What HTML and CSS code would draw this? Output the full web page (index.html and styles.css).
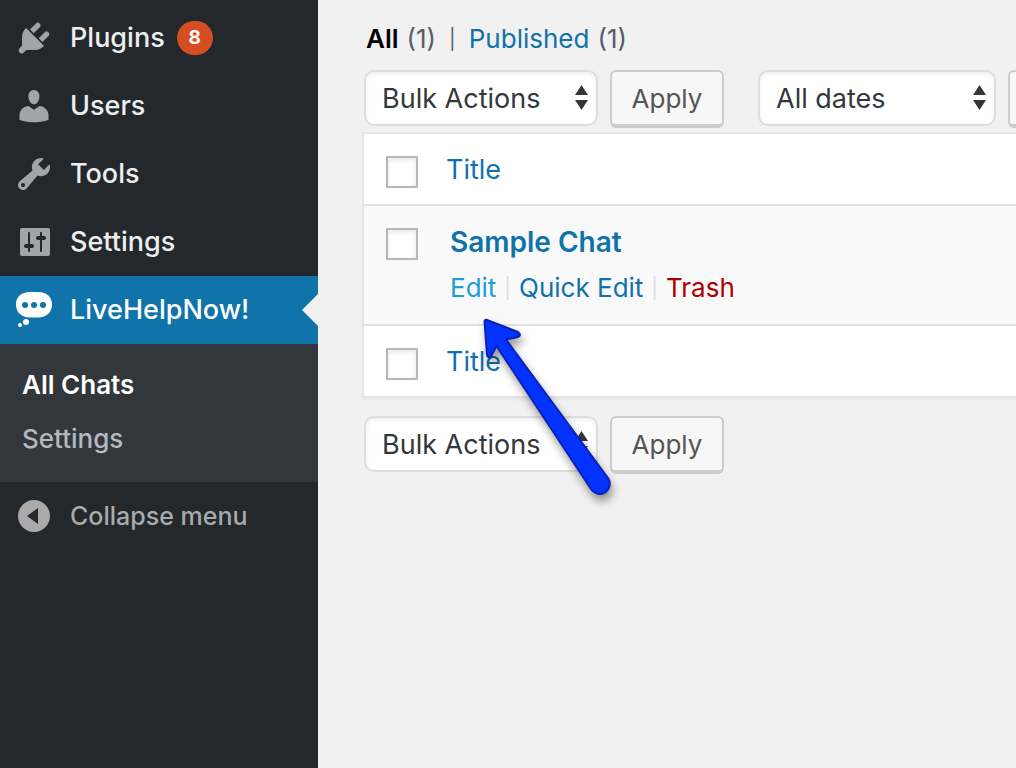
FILE: index.html
```html
<!DOCTYPE html>
<html lang="en">
<head>
  <meta charset="UTF-8">
  <meta name="viewport" content="width=device-width, initial-scale=1.0">
  <title>All Chats</title>
  <link rel="stylesheet" href="styles.css">
</head>
<body>
  <!-- Admin menu -->
  <nav class="admin-menu">
    <a class="menu-item" href="#plugins">
      <svg class="menu-icon" viewBox="0 0 20 20"><path d="M13.11 4.36L9.87 7.6 8 5.73l3.24-3.24c.35-.34 1.05-.2 1.56.32.52.51.66 1.21.31 1.55zm-8 1.77l.91-1.12 9.01 9.01-1.19.84c-.71.71-2.63 1.16-3.82 1.16H6.14L4.9 17.26c-.59.59-1.54.59-2.12 0-.59-.58-.59-1.53 0-2.12l1.24-1.24v-3.88c0-1.13.4-3.19 1.09-3.89zm7.26 3.97l3.24-3.24c.34-.35 1.04-.21 1.55.31.52.51.66 1.21.31 1.55l-3.24 3.25z"/></svg>
      Plugins <span class="update-count">8</span>
    </a>
    <a class="menu-item" href="#users">
      <svg class="menu-icon" viewBox="0 0 20 20"><path d="M10 9.25c-2.27 0-2.73-3.44-2.73-3.44C7 4.02 7.82 2 9.97 2c2.16 0 2.98 2.02 2.71 3.81 0 0-.41 3.44-2.68 3.44zm0 2.57L12.72 10c2.39 0 4.52 2.33 4.52 4.53v2.49s-3.65 1.13-7.24 1.13c-3.65 0-7.24-1.13-7.24-1.13v-2.49c0-2.25 1.94-4.48 4.47-4.48z"/></svg>
      Users
    </a>
    <a class="menu-item" href="#tools">
      <svg class="menu-icon" viewBox="0 0 20 20"><path d="M16.68 9.77c-1.34 1.34-3.3 1.67-4.95.99l-5.41 6.52c-.99.99-2.59.99-3.58 0s-.99-2.59 0-3.57l6.52-5.42c-.68-1.65-.35-3.61.99-4.95 1.28-1.28 3.12-1.62 4.72-1.06l-2.89 2.89 2.82 2.82 2.86-2.87c.53 1.58.18 3.39-1.08 4.65zM3.81 16.21c.4.39 1.04.39 1.43 0 .4-.4.4-1.04 0-1.43-.39-.4-1.03-.4-1.43 0-.39.39-.39 1.03 0 1.43z"/></svg>
      Tools
    </a>
    <a class="menu-item" href="#settings">
      <svg class="menu-icon" viewBox="0 0 20 20"><path d="M18 16V4c0-.55-.45-1-1-1H4c-.55 0-1 .45-1 1v12c0 .55.45 1 1 1h13c.55 0 1-.45 1-1zM8 11h1c.55 0 1 .45 1 1s-.45 1-1 1H8v1.5c0 .28-.22.5-.5.5s-.5-.22-.5-.5V13H6c-.55 0-1-.45-1-1s.45-1 1-1h1V5.5c0-.28.22-.5.5-.5s.5.22.5.5V11zm5-2h-1c-.55 0-1-.45-1-1s.45-1 1-1h1V5.5c0-.28.22-.5.5-.5s.5.22.5.5V7h1c.55 0 1 .45 1 1s-.45 1-1 1h-1v5.5c0 .28-.22.5-.5.5s-.5-.22-.5-.5V9z"/></svg>
      Settings
    </a>
    <a class="menu-item current" href="#livehelpnow">
      <svg class="menu-icon" viewBox="0 0 40 40">
        <path fill-rule="evenodd" d="M16 2h8c9 0 14 5 14 12.500S33 27.500 24 27.500h-8C7 27.500 2 22 2 14.500S7 2 16 2zM11 12a3 3 0 1 0 0 6 3 3 0 0 0 0-6zm9 0a3 3 0 1 0 0 6 3 3 0 0 0 0-6zm9 0a3 3 0 1 0 0 6 3 3 0 0 0 0-6z"/>
        <circle cx="12" cy="32" r="3"/>
        <circle cx="6" cy="35" r="2"/>
      </svg>
      LiveHelpNow!
    </a>
    <div class="submenu">
      <a class="submenu-item active" href="#all-chats">All Chats</a>
      <a class="submenu-item" href="#chat-settings">Settings</a>
    </div>
    <button type="button" class="menu-item collapse">
      <svg class="menu-icon" viewBox="0 0 40 40"><path fill-rule="evenodd" d="M20 4a16 16 0 1 0 0 32 16 16 0 0 0 0-32zm4 8v16l-11-8z"/></svg>
      Collapse menu
    </button>
  </nav>

  <!-- Chat list -->
  <main class="content">
    <div class="views">
      <a class="view-current" href="#all">All</a>
      <span>(1)</span>
      <span class="views-separator">|</span>
      <a href="#published">Published</a>
      <span>(1)</span>
    </div>

    <div class="tablenav">
      <div class="actions">
        <div class="select-box">
          <select class="bulk-select" aria-label="Select bulk action">
            <option>Bulk Actions</option>
            <option>Edit</option>
            <option>Move to Trash</option>
          </select>
          <svg class="select-arrows" viewBox="0 0 13 25"><path d="M6.500 0L13 10H0zM0 15h13L6.500 25z"/></svg>
        </div>
        <button type="button" class="button">Apply</button>
      </div>
      <div class="actions">
        <div class="select-box">
          <select class="date-select" aria-label="Filter by date">
            <option>All dates</option>
          </select>
          <svg class="select-arrows" viewBox="0 0 13 25"><path d="M6.500 0L13 10H0zM0 15h13L6.500 25z"/></svg>
        </div>
        <button type="button" class="button" aria-label="Filter"></button>
      </div>
    </div>

    <div class="table-box">
      <table class="chat-table">
        <thead>
          <tr>
            <td class="check-column"><input type="checkbox" aria-label="Select all"></td>
            <th scope="col"><a href="#title">Title</a></th>
          </tr>
        </thead>
        <tbody>
          <tr>
            <td class="check-column"><input type="checkbox" aria-label="Select Sample Chat"></td>
            <td class="chat-cell">
              <a class="row-title" href="#sample-chat">Sample Chat</a>
              <div class="row-actions">
                <a class="hovered" href="#edit">Edit</a>
                <span class="row-separator">|</span>
                <a href="#quick-edit">Quick Edit</a>
                <span class="row-separator">|</span>
                <a class="trash" href="#trash">Trash</a>
              </div>
            </td>
          </tr>
        </tbody>
        <tfoot>
          <tr>
            <td class="check-column"><input type="checkbox" aria-label="Select all"></td>
            <th scope="col"><a href="#title">Title</a></th>
          </tr>
        </tfoot>
      </table>
      <!-- Arrow pointing at the Edit link -->
      <svg class="pointer-arrow" viewBox="0 0 150 200">
        <path d="M10.500 11Q11 9.500 13 10L44 22Q48 25 44 27L32 29.500 134 168C141 179 126 191 117 179L22.500 36 17 46.500Q14 49 13 45z"/>
      </svg>
    </div>

    <div class="tablenav bottom">
      <div class="actions">
        <div class="select-box">
          <select class="bulk-select" aria-label="Select bulk action">
            <option>Bulk Actions</option>
            <option>Edit</option>
            <option>Move to Trash</option>
          </select>
          <svg class="select-arrows" viewBox="0 0 13 25"><path d="M6.500 0L13 10H0zM0 15h13L6.500 25z"/></svg>
        </div>
        <button type="button" class="button">Apply</button>
      </div>
    </div>
  </main>
</body>
</html>
```
FILE: styles.css
```css
/* General */
* {
  box-sizing: border-box;
}

body {
  display: flex;
  min-height: 100vh;
  margin: 0;
  background-color: #f1f1f1;
  color: #555d66;
  font-family: Inter, "Liberation Sans", sans-serif;
  font-size: 26px;
  line-height: 36px;
}

a {
  color: #0f72a9;
  text-decoration: none;
}

button,
select {
  font-family: inherit;
  font-size: inherit;
}

/* Admin menu */
.admin-menu {
  flex: none;
  width: 318px;
  padding-top: 4px;
  background-color: #23282d;
  font-weight: 500;
}

.menu-item {
  position: relative;
  display: flex;
  align-items: center;
  width: 100%;
  height: 68px;
  padding: 0 14px;
  border: none;
  background: none;
  color: #eee;
  font-size: 27px;
  cursor: pointer;
}

.menu-icon {
  flex: none;
  width: 40px;
  height: 40px;
  margin-right: 16px;
  fill: #a0a5aa;
}

.update-count {
  min-width: 36px;
  margin-left: 12px;
  border-radius: 17px;
  background-color: #d54e21;
  color: #fff;
  font-size: 19px;
  font-weight: 700;
  line-height: 34px;
  text-align: center;
}

.menu-item.current {
  background-color: #1073aa;
  color: #fff;
}

.current .menu-icon {
  fill: #fff;
}

/* Notch that points to the content */
.current::after {
  content: "";
  position: absolute;
  right: 0;
  top: 18px;
  border: 16px solid transparent;
  border-left: none;
  border-right-color: #f1f1f1;
}

.submenu {
  padding: 14px 0 16px;
  background-color: #32373c;
}

.submenu-item {
  display: block;
  padding: 9px 22px;
  color: #b4b9be;
}

.submenu-item.active {
  color: #fff;
  font-weight: 600;
}

.collapse {
  color: #aaa;
  font-size: 25px;
  font-weight: 500;
}

.collapse .menu-icon {
  fill: #aaa;
}

/* Content */
.content {
  flex: 1;
  min-width: 0;
  padding: 21px 0 0 44px;
  overflow: hidden;
}

.views {
  display: flex;
  gap: 8px;
  margin: 0 0 13px 4px;
}

.views .view-current {
  color: #000;
  font-weight: 600;
}

.views-separator {
  padding: 0 5px;
  font-size: 20px;
}

/* Bulk actions and filters */
.tablenav {
  display: flex;
  gap: 34px;
  height: 62px;
  padding-left: 2px;
}

.tablenav.bottom {
  margin-top: 18px;
}

.actions {
  display: flex;
  flex: none;
  align-items: flex-start;
  gap: 12px;
}

.select-box {
  position: relative;
}

.select-box select {
  display: block;
  height: 56px;
  padding: 0 16px;
  border: 2px solid #ddd;
  border-radius: 10px;
  background-color: #fff;
  box-shadow: inset 0 2px 4px rgba(0, 0, 0, 0.07);
  color: #32373c;
  font-size: 27px;
  appearance: none;
}

.bulk-select {
  width: 234px;
}

.date-select {
  width: 238px;
}

.select-arrows {
  position: absolute;
  top: 15px;
  right: 10px;
  width: 13px;
  height: 25px;
  fill: #32373c;
  pointer-events: none;
}

.button {
  min-width: 114px;
  height: 58px;
  padding: 0 18px;
  border: 2px solid #ccc;
  border-bottom-width: 4px;
  border-radius: 6px;
  background-color: #f7f7f7;
  color: #555;
  cursor: pointer;
}

/* Chat table */
.table-box {
  position: relative;
}

.chat-table {
  width: calc(100% + 40px);
  border: 2px solid #e5e5e5;
  border-spacing: 0;
  background-color: #fff;
  box-shadow: 0 2px 2px rgba(0, 0, 0, 0.04);
}

.chat-table th,
.chat-table td {
  padding: 0;
  text-align: left;
  vertical-align: top;
}

.chat-table th {
  height: 70px;
  padding: 18px 0 16px;
  font-size: 27px;
  font-weight: 400;
}

.chat-table .check-column {
  width: 82px;
  padding: 22px 0 0 22px;
}

.chat-table input {
  display: block;
  width: 32px;
  height: 32px;
  margin: 0;
  border: 2px solid #b4b9be;
  background-color: #fff;
  box-shadow: inset 0 2px 4px rgba(0, 0, 0, 0.1);
  appearance: none;
}

.chat-table tbody td {
  height: 122px;
  border-top: 2px solid #e1e1e1;
  border-bottom: 2px solid #e1e1e1;
  background-color: #f9f9f9;
}

.chat-table .chat-cell {
  padding: 18px 0 0 4px;
}

.row-title {
  font-size: 28px;
  font-weight: 600;
}

.row-actions {
  display: flex;
  gap: 8px;
  margin-top: 9px;
  color: #ddd;
}

.row-separator {
  font-size: 20px;
}

.row-actions .hovered {
  color: #1a9fd6;
}

.row-actions .trash {
  color: #a00;
}

/* Arrow over the table */
.pointer-arrow {
  position: absolute;
  top: 178px;
  left: 112px;
  width: 150px;
  height: 200px;
  fill: #0432ff;
  stroke: #0a22b4;
  stroke-width: 2px;
  stroke-linejoin: round;
  filter: drop-shadow(2px 6px 4px rgba(0, 0, 0, 0.4));
  overflow: visible;
  pointer-events: none;
  z-index: 1;
}
```
